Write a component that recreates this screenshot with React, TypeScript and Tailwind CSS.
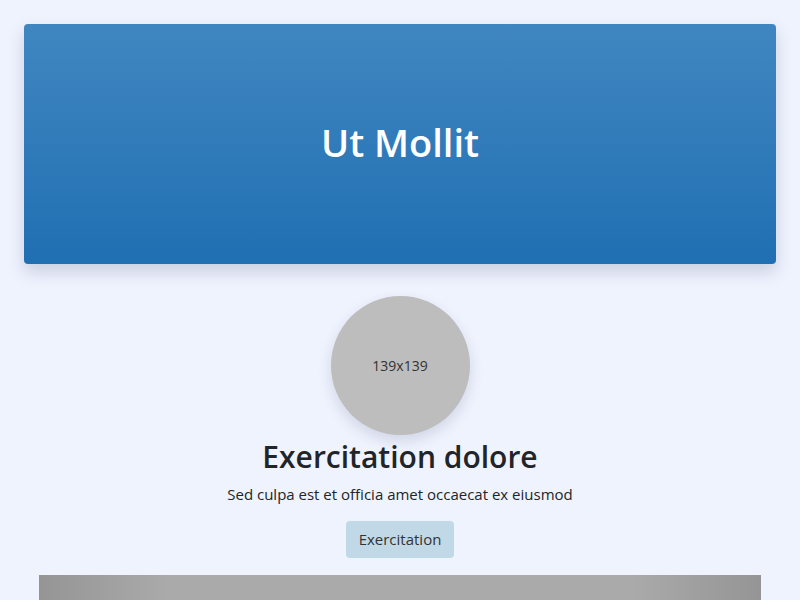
export default function App() {
  return (
    <div
      className="min-h-[600px] bg-[#eff3fe] px-6 pt-6 text-[#212529]"
      style={{ fontFamily: '"Open Sans", "Noto Sans", sans-serif' }}
    >
      <header className="flex h-[240px] items-center justify-center rounded bg-gradient-to-b from-[#4087c1] to-[#1f6fb2] shadow-[0_8px_16px_rgba(40,50,90,0.18)]">
        <h1 className="-mt-1 text-[38px] font-semibold text-white">Ut Mollit</h1>
      </header>

      <section className="mt-8 flex flex-col items-center">
        <div className="flex h-[139px] w-[139px] items-center justify-center rounded-full bg-[#bdbdbd] text-[14px] text-[#333] shadow-[0_6px_14px_rgba(40,50,90,0.15)]">
          139x139
        </div>
        <h2 className="mt-0.5 text-[30px] font-semibold leading-[40px]">
          Exercitation dolore
        </h2>
        <p className="mt-[7px] text-[15px] leading-5">
          Sed culpa est et officia amet occaecat ex eiusmod
        </p>
        <button className="mt-[17px] h-[37px] rounded bg-[#c1d9e6] px-[13px] text-[15px] text-[#333]">
          Exercitation
        </button>
      </section>

      <div className="mx-[15px] mt-[17px] h-[40px] bg-[linear-gradient(to_right,#959595,#aaaaaa_18%,#aaaaaa_82%,#959595)]" />
    </div>
  );
}
